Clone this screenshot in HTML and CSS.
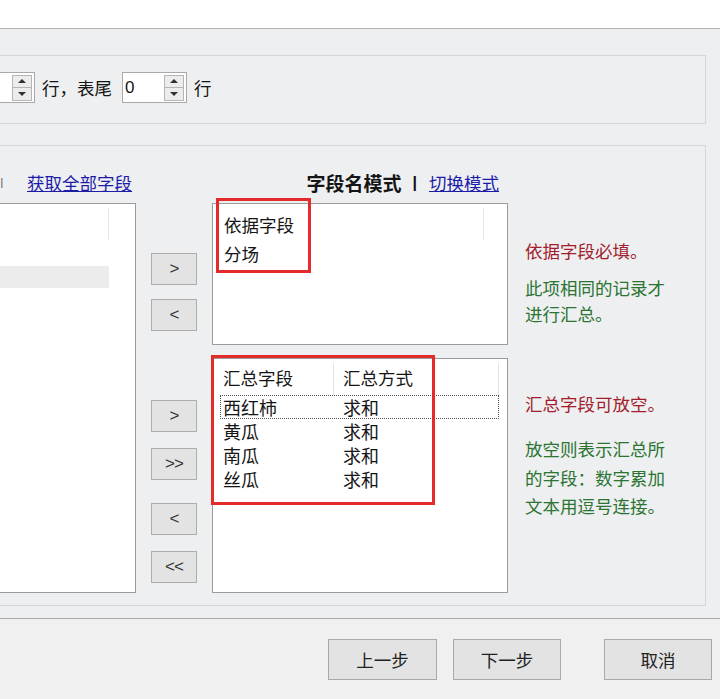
FILE: index.html
```html
<!DOCTYPE html>
<html lang="zh-CN">
<head>
    <meta charset="UTF-8">
    <meta name="viewport" content="width=device-width, initial-scale=1.0">
    <title>分类汇总向导</title>
    <link rel="stylesheet" href="styles.css">
</head>
<body>

    <div class="titlebar"></div>

    <!-- 表头 / 表尾 行数 -->
    <div class="group group-top">
        <div class="spin-input spin-first">
            <span class="spin-value"></span>
            <span class="spin"><i class="up"></i><i class="down"></i></span>
        </div>
        <span class="label label-tail">行，表尾</span>
        <div class="spin-input">
            <span class="spin-value">0</span>
            <span class="spin"><i class="up"></i><i class="down"></i></span>
        </div>
        <span class="label">行</span>
    </div>

    <!-- 字段选择 -->
    <div class="group group-main">
        <div class="head head-left">
            <span class="sep">|</span>
            <a class="link" href="#">获取全部字段</a>
        </div>
        <div class="head head-right">
            <b>字段名模式</b>
            <span class="sep">|</span>
            <a class="link" href="#">切换模式</a>
        </div>

        <div class="list list-source">
            <div class="list-head"><span class="col col-src"></span></div>
            <div class="blank"></div>
            <div class="shade"></div>
        </div>

        <div class="mover mover-top">
            <div class="btn-pair">
                <button class="btn-move">&gt;</button>
                <button class="btn-move">&lt;</button>
            </div>
        </div>

        <div class="list list-key">
            <div class="list-head"><span class="col col-key">依据字段</span></div>
            <div class="row row-key">分场</div>
            <div class="mark mark-key"></div>
        </div>

        <div class="notes notes-top">
            <p class="note red">依据字段必填。</p>
            <p class="note green">此项相同的记录才<br>进行汇总。</p>
        </div>

        <div class="mover mover-bottom">
            <div class="btn-pair">
                <button class="btn-move">&gt;</button>
                <button class="btn-move">&gt;&gt;</button>
            </div>
            <div class="btn-pair">
                <button class="btn-move">&lt;</button>
                <button class="btn-move">&lt;&lt;</button>
            </div>
        </div>

        <div class="list list-sum">
            <div class="list-head">
                <span class="col col-field">汇总字段</span>
                <span class="col col-way">汇总方式</span>
            </div>
            <div class="sum-row focused"><span class="cell">西红柿</span><span class="cell">求和</span></div>
            <div class="sum-row"><span class="cell">黄瓜</span><span class="cell">求和</span></div>
            <div class="sum-row"><span class="cell">南瓜</span><span class="cell">求和</span></div>
            <div class="sum-row"><span class="cell">丝瓜</span><span class="cell">求和</span></div>
            <div class="mark mark-sum"></div>
        </div>

        <div class="notes notes-bottom">
            <p class="note red">汇总字段可放空。</p>
            <p class="note green">放空则表示汇总所<br>的字段：数字累加<br>文本用逗号连接。</p>
        </div>
    </div>

    <div class="footer">
        <button class="btn btn-prev">上一步</button>
        <button class="btn btn-next">下一步</button>
        <button class="btn">取消</button>
    </div>

</body>
</html>
```

FILE: styles.css
```css
body {
    margin: 0;
    height: 699px;
    overflow: hidden;
    background-color: #eeeff1;
    color: #151515;
    font-family: "Noto Sans CJK SC", "Noto Sans", sans-serif;
    font-size: 17.5px;
}

.titlebar {
    height: 28px;
    background-color: #ffffff;
    border-bottom: 1px solid #b4b4b4;
}

.group {
    margin: 0 14px 0 -60px;
    border: 1px solid #d6d6d8;
    box-sizing: border-box;
}

/* ---- 上部：行数 ---- */

.group-top {
    margin-top: 26px;
    height: 69px;
    display: flex;
    align-items: center;
    padding: 0 0 4px 29px;
}

.spin-input {
    display: flex;
    align-items: center;
    width: 65px;
    height: 31px;
    box-sizing: border-box;
    border: 1px solid #a9a9a9;
    background-color: #ffffff;
}

.spin-value {
    flex: 1;
    padding-left: 2px;
    font-family: "Liberation Sans", sans-serif;
    font-size: 17px;
    line-height: 29px;
}

.spin {
    display: flex;
    flex-direction: column;
    width: 20px;
    height: 26px;
    margin-right: 2px;
}

.spin i {
    flex: 1;
    display: flex;
    align-items: center;
    justify-content: center;
    background-color: #ececec;
    border: 1px solid #b5b5b5;
}

.spin i + i {
    border-top: none;
}

.spin i::before {
    content: "";
    width: 0;
    height: 0;
    border-left: 4px solid transparent;
    border-right: 4px solid transparent;
}

.spin .up::before {
    border-bottom: 4px solid #333;
}

.spin .down::before {
    border-top: 4px solid #333;
}

.label {
    margin-left: 7px;
    line-height: 31px;
}

.label-tail {
    margin-right: 10px;
}

/* ---- 中部：字段选择 ---- */

.group-main {
    position: relative;
    margin-top: 21px;
    height: 461px;
    padding: 27px 0 0 9px;
    display: grid;
    grid-template-columns: 186px 46px 296px 1fr;
    grid-template-rows: 20px 142px 238px;
    column-gap: 15px;
    row-gap: 10px;
}

.head {
    display: flex;
    align-items: center;
    line-height: 20px;
    white-space: nowrap;
}

.head-left {
    grid-column: 1;
    grid-row: 1;
    justify-content: flex-end;
    padding-right: 4px;
}

.head-right {
    grid-column: 3;
    grid-row: 1;
    justify-content: flex-end;
    padding-right: 9px;
}

.head b {
    font-size: 19px;
    font-weight: 700;
}

.sep {
    margin: 0 12px 0 11px;
    font-family: "Liberation Sans", sans-serif;
    font-size: 16px;
    font-weight: 700;
    color: #111;
}

.head-left .sep {
    margin: 0 24px 0 0;
    font-size: 10px;
    font-weight: 400;
    color: #444;
}

.link {
    color: #1c1ca8;
    font-size: 17.5px;
    text-decoration: underline;
}

.list {
    position: relative;
    background-color: #ffffff;
    border: 1px solid #9b9b9b;
    box-sizing: border-box;
}

.list-source {
    grid-column: 1;
    grid-row: 2 / 4;
}

.list-key {
    grid-column: 3;
    grid-row: 2;
}

.list-sum {
    grid-column: 3;
    grid-row: 3;
    margin-top: 3px;
}

.list-head {
    display: flex;
    height: 36px;
}

.col {
    height: 32px;
    margin-top: 4px;
    box-sizing: border-box;
    border-right: 1px solid #e4e4e4;
    line-height: 30px;
}

.col-src {
    width: 158px;
}

.col-key {
    width: 271px;
    padding-left: 11px;
    line-height: 34px;
}

.col-field {
    width: 121px;
    padding-left: 10px;
}

.col-way {
    width: 165px;
    padding-left: 9px;
}

.blank {
    height: 26px;
}

.shade {
    width: 158px;
    height: 22px;
    background-color: #ececec;
}

.row-key {
    margin-top: 2px;
    padding-left: 11px;
    line-height: 24px;
}

.sum-row {
    display: flex;
    width: 279px;
    height: 24px;
    margin-left: 7px;
    line-height: 24px;
    font-size: 18px;
}

.sum-row .cell:first-child {
    width: 123px;
    padding-left: 3px;
    box-sizing: border-box;
}

.sum-row.focused {
    outline: 1px dotted #555;
    outline-offset: -1px;
}

.mark {
    position: absolute;
    border: 3px solid #e32b2b;
    box-sizing: border-box;
}

.mark-key {
    left: 3px;
    top: -6px;
    width: 95px;
    height: 75px;
}

.mark-sum {
    left: -2px;
    top: -4px;
    width: 224px;
    height: 150px;
}

.mover {
    grid-column: 2;
    display: flex;
    flex-direction: column;
    gap: 23px;
}

.mover-top {
    grid-row: 2;
    padding-top: 50px;
}

.mover-bottom {
    grid-row: 3;
    padding-top: 45px;
}

.btn-pair {
    display: flex;
    flex-direction: column;
    gap: 16px;
}

.mover-top .btn-pair {
    gap: 14px;
}

.btn-move {
    width: 46px;
    height: 32px;
    padding: 0;
    background-color: #e3e3e3;
    border: 1px solid #adadad;
    color: #333;
    font-family: "Liberation Sans", sans-serif;
    font-size: 17px;
    letter-spacing: -1px;
}

.notes {
    grid-column: 4;
    padding-left: 2px;
    font-size: 17.5px;
    white-space: nowrap;
}

.notes-top {
    grid-row: 2;
    padding-top: 34px;
}

.notes-bottom {
    grid-row: 3;
    padding-top: 35px;
}

.note {
    margin: 0;
    line-height: 27px;
}

.note.red {
    color: #a31d2c;
}

.note.green {
    color: #2b7431;
}

.notes-top .green {
    margin-top: 11px;
    line-height: 26px;
}

.notes-bottom .green {
    margin-top: 18px;
    line-height: 28.5px;
}

/* ---- 底部按钮 ---- */

.footer {
    margin-top: 12px;
    height: 81px;
    box-sizing: border-box;
    padding: 20px 8px 0 0;
    display: flex;
    align-items: flex-start;
    justify-content: flex-end;
    background-color: #f0f0f0;
    border-top: 1px solid #a9a9a9;
}

.btn {
    width: 108px;
    height: 41px;
    background-color: #e3e3e3;
    border: 1px solid #a9a9a9;
    color: #222;
    font-family: "Noto Sans CJK SC", sans-serif;
    font-size: 17.5px;
}

.btn-prev {
    width: 109px;
    margin-right: 16px;
}

.btn-next {
    margin-right: 43px;
}
```
